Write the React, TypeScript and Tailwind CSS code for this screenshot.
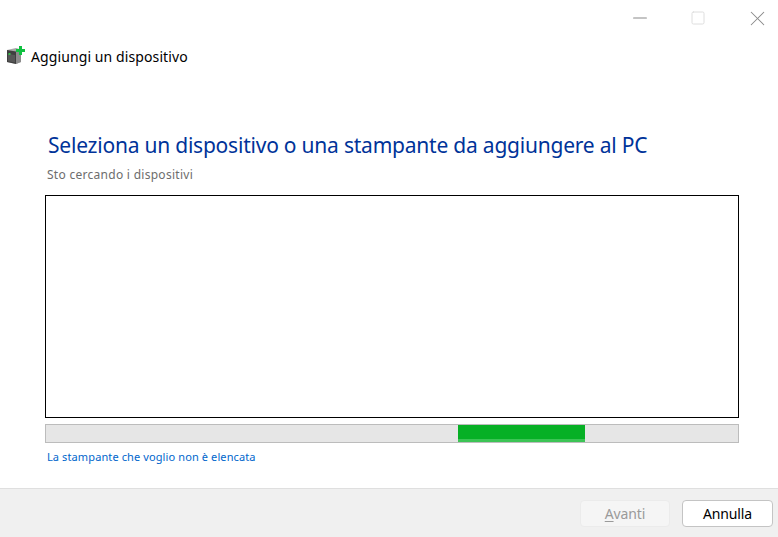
import { Minus, Square, X } from "lucide-react"

function DeviceIcon() {
  return (
    <svg width="20" height="20" viewBox="0 0 20 20" className="block">
      <path d="M2 4 L11 2 L16 3.5 V16 L11 18 L2 16 Z" fill="#a8a8a8" />
      <path d="M2 4 L11 5.5 V18 L2 16 Z" fill="#3f3f3f" />
      <path d="M11 5.5 L16 3.5 V16 L11 18 Z" fill="#8c8c8c" />
      <path d="M3 8 L10 9 V16.5 L3 15.2 Z" fill="#565656" />
      <rect x="3.5" y="7" width="2" height="2" fill="#36c24a" />
      <path d="M14 0 H17 V3 H20 V6 H17 V9 H14 V6 H11 V3 H14 Z" fill="#10c040" />
    </svg>
  )
}

export default function App() {
  return (
    <div className="w-[778px] h-[537px] bg-white flex flex-col overflow-hidden font-['Noto_Sans','Open_Sans',sans-serif]">
      <div className="h-[36px] flex justify-end items-start shrink-0 text-[#8a8a8a]">
        <div className="w-[58px] h-[36px] flex items-center justify-center">
          <Minus size={22} strokeWidth={1.1} />
        </div>
        <div className="w-[58px] h-[36px] flex items-center justify-center text-[#dcdcdc]">
          <Square size={16} strokeWidth={1.4} />
        </div>
        <div className="w-[51px] h-[36px] flex items-center justify-center pl-[9px]">
          <X size={25} strokeWidth={1} />
        </div>
      </div>

      <div className="flex items-center h-[40px] pl-[5px] shrink-0">
        <DeviceIcon />
        <span className="ml-[6px] text-[14px] text-black tracking-[0.1px]">Aggiungi un dispositivo</span>
      </div>

      <div className="flex-1 pl-[45px] pr-[39px] flex flex-col">
        <h1 className="mt-[54px] ml-[3px] h-[30px] leading-[30px] text-[21px] text-[#003399] whitespace-nowrap tracking-[-0.22px]">
          Seleziona un dispositivo o una stampante da aggiungere al PC
        </h1>
        <p className="mt-[5px] ml-[2px] h-[19px] leading-[19px] text-[12px] text-[#6d6d6d] tracking-[0.28px]">Sto cercando i dispositivi</p>
        <div className="mt-[11px] h-[223px] border border-black bg-white" />
        <div className="mt-[6px] h-[19px] bg-[#e6e6e6] border border-[#bcbcbc] overflow-hidden">
          <div className="ml-[412px] w-[127px] h-full flex flex-col">
            <div className="flex-1 bg-[#06b025]" />
            <div className="h-[3px] bg-[#3cc455]" />
          </div>
        </div>
        <a className="mt-[5px] ml-[2px] h-[18px] leading-[18px] text-[11px] text-[#0066cc] tracking-[0.11px] whitespace-nowrap">La stampante che voglio non è elencata</a>
      </div>

      <div className="h-[49px] shrink-0 bg-[#f0f0f0] border-t border-[#dfdfdf] flex justify-end items-start pt-[11px] pr-[5px] gap-[12px]">
        <button className="w-[90px] h-[27px] rounded-[4px] bg-[#f5f5f5] border border-[#ebebeb] text-[14px] text-[#9a9a9a] tracking-[-0.12px]">
          <span className="underline underline-offset-2">A</span>vanti
        </button>
        <button className="w-[91px] h-[27px] rounded-[4px] bg-white border border-[#c4c4c4] text-[14px] text-black tracking-[-0.12px]">
          Annulla
        </button>
      </div>
    </div>
  )
}
